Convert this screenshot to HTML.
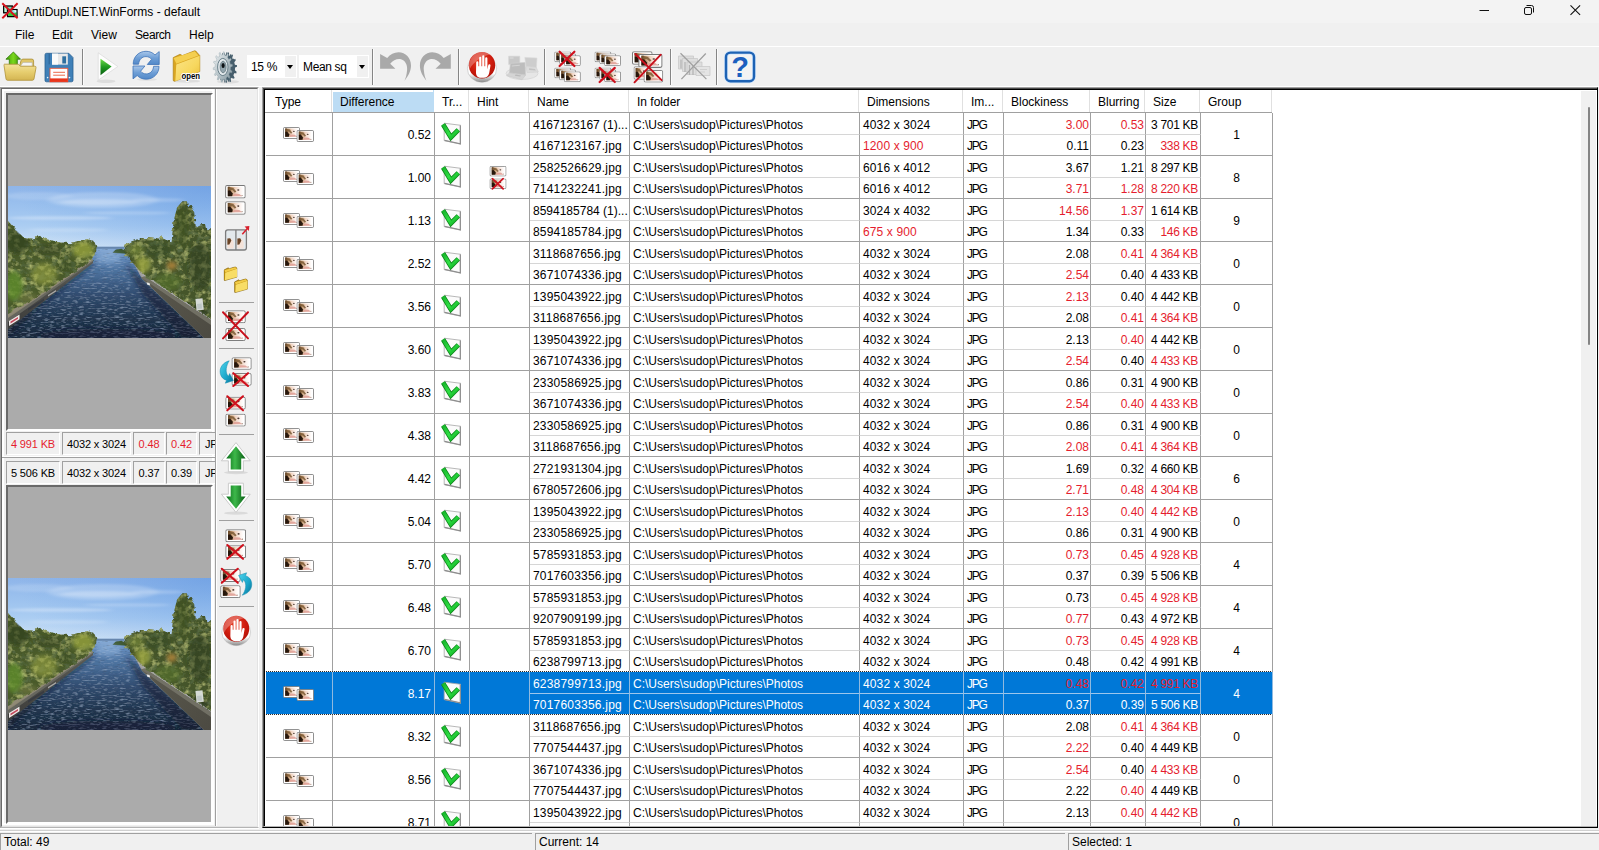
<!DOCTYPE html>
<html lang="en"><head><meta charset="utf-8"><title>AntiDupl.NET.WinForms - default</title>
<style>
html,body{margin:0;padding:0}
html{overflow:hidden;width:1599px;height:850px}
body{width:1599px;height:850px;overflow:hidden;position:relative;background:#f0f0f0;font-family:"Liberation Sans",sans-serif;font-size:12px;color:#000}
svg{display:block}
#titlebar{position:absolute;left:0;top:0;width:1599px;height:23px;background:#f3f3f3}
#titlebar .appicon{position:absolute;left:0;top:0}
#titlebar .title{position:absolute;left:24px;top:1px;line-height:23px;white-space:nowrap}
#titlebar .wc{position:absolute;top:0}
#menubar{position:absolute;left:0;top:23px;width:1599px;height:23px}
#menubar span{position:absolute;top:1px;line-height:23px}
#menubar span:nth-child(4){letter-spacing:-.4px}
#toolbar{position:absolute;left:0;top:46px;width:1599px;height:41px;box-sizing:border-box;border-top:1px solid #fff;border-bottom:1px solid #fff}
#toolbar .tb{position:absolute;top:4px;width:32px;height:32px}
#toolbar .sep{position:absolute;top:2px;width:1px;height:36px;background:#858585;box-shadow:1px 0 0 #fbfbfb}
#toolbar .combo{position:absolute;top:8px;height:23px;background:#fff;box-sizing:border-box;line-height:25px;padding-left:4px;letter-spacing:-.35px;white-space:nowrap;overflow:hidden}
#toolbar .combo i{position:absolute;right:1px;top:1px;width:11px;height:21px;background:#f0f0f0}
#toolbar .combo i:after{content:"";position:absolute;left:2px;top:9px;border:3px solid transparent;border-top:4px solid #000;border-bottom:0}
/* left container */
#leftpanel{position:absolute;left:0;top:87px;width:259px;height:741px;box-sizing:border-box;border-top:1px solid #a0a0a0;border-left:1px solid #a0a0a0;border-right:1px solid #fff;border-bottom:1px solid #b4b4b4;box-shadow:0 1px 0 #fff;background:#f0f0f0}
#leftpanel .lp-in{position:absolute;left:0;top:0;right:0;bottom:0;border-top:1px solid #696969;border-left:1px solid #696969;border-right:1px solid #e3e3e3;border-bottom:1px solid #e3e3e3}
#leftpanel .pframe{position:absolute;left:1px;top:1px;width:212px;height:736px;border:2px solid #fff;box-sizing:border-box}
#leftpanel .vline{position:absolute;left:214px;top:1px;width:1px;height:737px;background:#a0a0a0;border-right:1px solid #fff}
.pic{position:absolute;left:5px;width:207px;box-sizing:border-box;border-top:2px solid #696969;border-left:2px solid #696969;border-right:2px solid #fff;border-bottom:2px solid #fff;background:#ababab;overflow:hidden}
.pic svg{position:absolute;left:0}
.lblrow{position:absolute;left:1px;top:0;width:213px;height:23px;overflow:hidden}
.lbl{position:absolute;top:0;height:23px;box-sizing:border-box;border-top:1px solid #a0a0a0;border-left:1px solid #a0a0a0;border-right:1px solid #fff;border-bottom:1px solid #fff;line-height:23px;font-size:11px;letter-spacing:-.15px;text-align:center;white-space:nowrap;background:#f0f0f0;overflow:hidden}
.red{color:#e51d2e}
.split{position:absolute;left:1px;top:368px;width:213px;height:1px;background:#a0a0a0;border-top:1px solid #fff}
#side{position:absolute;left:216px;top:90px}
#side .sb{position:absolute;left:3px;width:32px;height:32px}
#side .hs{position:absolute;left:3px;width:34px;height:1px;background:#a0a0a0}
/* grid */
#grid{position:absolute;left:262px;top:87px;width:1336px;height:741px;box-sizing:border-box;border-top:1px solid #a0a0a0;border-left:1px solid #a0a0a0;border-right:1px solid #000;border-bottom:1px solid #000}
#grid:before{content:"";position:absolute;left:0;top:0;right:0;bottom:0;border-top:1px solid #4a4a4a;border-left:1px solid #4a4a4a;border-bottom:1px solid #b3b3b3}
#grid:after{content:"";position:absolute;left:1px;top:1px;right:0;bottom:1px;border-top:1px solid #000;border-left:1px solid #000}
#gridin{position:absolute;left:2px;top:2px;width:1332px;height:736px;background:#fff;overflow:hidden}
.hdr{position:absolute;left:0;top:0;width:1007px;height:22px;border-bottom:1px solid #a0a0a0}
.h{position:absolute;top:0;height:22px;line-height:24px;box-sizing:content-box;border-right:1px solid #e0e0e0;padding-left:7px;box-sizing:border-box;white-space:nowrap;overflow:hidden}
.h.sorted{background:linear-gradient(#fff 2px,#bcdcf4 2px);border-right-color:#bcdcf4}
.h:first-child{padding-left:9px}
.row{position:absolute;left:0;width:1007px;height:43px}
.c{position:absolute;box-sizing:content-box;border-right:1px solid #a0a0a0;border-bottom:1px solid #a0a0a0;white-space:nowrap;overflow:hidden}
.c.sub{border-bottom-color:#d6d6d6}
.c.l{}
.c.r{text-align:right}
.c.sz{letter-spacing:-.3px}
.c.nm{letter-spacing:.2px}
.c.dm{letter-spacing:.12px}
.c.jp{letter-spacing:-1.2px}
.c.ctr{text-align:center}
.c svg{position:absolute}
.c .ti{left:17px;top:14px}
.c .ci{left:4px;top:8px}
.c .hi{left:19px;top:10px}
.row.sel .c{background:#0078d7;color:#fff}
.row.sel .c.red{color:#e51d2e}
.vscroll{position:absolute;left:1318px;top:3px;width:15px;height:735px;background:#f0f0f0}
.vscroll .thumb{position:absolute;left:7px;top:16px;width:2px;height:238px;background:#858585;border-radius:1px}
#status{position:absolute;left:0;top:831px;width:1599px;height:18px;overflow:hidden;border-top:1px solid #fff;box-shadow:0 -1px 0 #d0d0d0}
#status .sp{position:absolute;top:1px;height:20px;line-height:17px;box-sizing:border-box;padding-left:3px;border-left:1px solid #a0a0a0;border-top:1px solid #a0a0a0}

#toolbar .tbsvg{position:absolute;left:0;top:-1px}

.row.sel:before,.row.sel:after{content:"";position:absolute;left:0;width:1007px;height:1px;background:repeating-linear-gradient(90deg,#f4f4f4 0 1px,#2a2a2a 1px 2px);z-index:2}
.row.sel:before{top:-1px}
.row.sel:after{top:42px}
.row.sel .c{border-right-color:#8fb9df}
.row.sel .c.sub{border-bottom-color:#9cc6ec}

</style></head>
<body>
<svg width="0" height="0" style="position:absolute">
<defs>
<linearGradient id="g-face" x1="0" y1="0" x2="1" y2="0"><stop offset="0" stop-color="#5e3e24"/><stop offset=".22" stop-color="#c0946a"/><stop offset=".48" stop-color="#f0d3c0"/><stop offset=".75" stop-color="#fbeee8"/><stop offset="1" stop-color="#ffffff"/></linearGradient>
<linearGradient id="g-chk" x1="0" y1="0" x2="1" y2="1"><stop offset="0" stop-color="#17b42a"/><stop offset=".55" stop-color="#2ee044"/><stop offset="1" stop-color="#0fae22"/></linearGradient>
<symbol id="ph" viewBox="0 0 20.5 13.5" preserveAspectRatio="none"><rect x=".5" y=".5" width="19.500" height="12.500" rx="1.500" fill="#fff" stroke="#787878"/><rect x="2.700" y="1.700" width="15.300" height="9.400" fill="url(#g-face)"/><path d="M2.700 1.700h2l-.4 3.800-1.600.6z" fill="#6e4e2c"/><path d="M4.400 2.300l3.800.6 3 3.500-1.500 1.200L7.200 5 4.300 5.200z" fill="#7d5c36" opacity=".85"/><path d="M2.700 11.100V5.700l2.300-.5 2.600 3.300-.5 2.600z" fill="#1d0f07" opacity=".92"/><path d="M7.300 11.100l1.800-2.600 5 .3 3 2.300z" fill="#e0a198" opacity=".9"/><ellipse cx="13.100" cy="4.900" rx="1.100" ry=".8" fill="#4c3a32"/><circle cx="16.900" cy="10.400" r=".6" fill="#9a8070"/></symbol>
<symbol id="i-type" viewBox="0 0 32 16"><use href="#ph" x="0" y="0" width="17" height="12"/><use href="#ph" x="13.5" y="3" width="17.5" height="12"/></symbol>
<symbol id="i-check" viewBox="0 0 22 26"><path d="M5.2 2.2l16.6 2.1v18.9L5.2 19.6z" fill="#fbfbfb" stroke="#a6a6a6" stroke-width=".8"/><path d="M21.3 4.6v18.2L5.6 19.4" fill="none" stroke="#8c8c8c" stroke-width="1.2"/><path d="M4.100 3.400L11.900 16.300 19.300 8.900" fill="none" stroke="#0b8418" stroke-width="4.800" stroke-linejoin="miter" stroke-linecap="butt"/><path d="M4.100 3.400L11.900 16.300 19.300 8.900" fill="none" stroke="url(#g-chk)" stroke-width="3.300" stroke-linejoin="miter" stroke-linecap="butt"/></symbol>
<symbol id="xr" viewBox="0 0 14 14"><path d="M1 1.2l12 11.6M13 1.2L1 12.8" stroke="#d0121e" stroke-width="1.9" fill="none" stroke-linecap="round"/></symbol>
<symbol id="i-hint" viewBox="0 0 18 24"><use href="#ph" x=".5" y="0" width="17" height="10.5"/><use href="#ph" x=".5" y="12.5" width="17" height="10.5"/><use href="#xr" x="2" y="11.5" width="13.5" height="12.5"/></symbol>
<symbol id="i-app" viewBox="0 0 20 20"><rect x="3.700" y="6" width="8.600" height="6.800" fill="#7fd6b0" stroke="#000" stroke-width="1.300"/><path d="M4.600 7h2v5h-2z" fill="#bdf0d8"/><rect x="7.600" y="9.600" width="9.400" height="7" fill="#8fe0e0" stroke="#000" stroke-width="1.300"/><path d="M8.300 16v-2.300l2.200-1.500 3.200 1.300 2.600-1v3.500z" fill="#35c83a"/><path d="M12.500 10.300h3.800v2.200z" fill="#e8ffff"/><path d="M2.300 3.300l15.300 15M17.600 3.300L2.300 18.300" stroke="#d8141c" stroke-width="1.900"/></symbol>
</defs>
</svg>
<svg width="0" height="0" style="position:absolute">
<defs>
<linearGradient id="c-sky" x1="0" y1="0" x2="0" y2="1"><stop offset="0" stop-color="#8fb5e9"/><stop offset=".3" stop-color="#9bc1ee"/><stop offset=".6" stop-color="#abcdf2"/><stop offset=".85" stop-color="#c6ddf5"/><stop offset="1" stop-color="#d6e8f8"/></linearGradient><radialGradient id="c-sky2" cx="1" cy="0" r=".95" gradientTransform="scale(1 1.6)"><stop offset="0" stop-color="#5a93e0" stop-opacity=".5"/><stop offset=".5" stop-color="#5a93e0" stop-opacity=".2"/><stop offset="1" stop-color="#5a93e0" stop-opacity="0"/></radialGradient>
<linearGradient id="c-wat" x1="0" y1="0" x2="0" y2="1"><stop offset="0" stop-color="#86aad6"/><stop offset=".1" stop-color="#6189ba"/><stop offset=".26" stop-color="#4b709c"/><stop offset=".5" stop-color="#324e72"/><stop offset=".75" stop-color="#223751"/><stop offset="1" stop-color="#19283b"/></linearGradient>
<linearGradient id="c-wallL" x1="1" y1="0" x2="0" y2="1"><stop offset="0" stop-color="#5c5c56"/><stop offset="1" stop-color="#3c3c3a"/></linearGradient>
<linearGradient id="c-wallR" x1="0" y1="0" x2="1" y2="1"><stop offset="0" stop-color="#5c5a4e"/><stop offset="1" stop-color="#4c4a42"/></linearGradient>
<filter id="c-blur" x="-10%" y="-100%" width="120%" height="300%"><feGaussianBlur stdDeviation="3 1.1"/></filter>
<filter id="c-b2" x="-30%" y="-30%" width="160%" height="160%"><feGaussianBlur stdDeviation="2.2"/></filter>
<filter id="c-tree" x="-3%" y="-3%" width="106%" height="106%"><feTurbulence type="fractalNoise" baseFrequency=".16 .18" numOctaves="3" seed="11" result="n"/><feDisplacementMap in="SourceGraphic" in2="n" scale="4.500" xChannelSelector="R" yChannelSelector="G" result="d"/><feColorMatrix in="n" type="matrix" values="0 0 0 0 .5  0 0 0 0 .56  0 0 0 0 .2  2.2 0 0 0 -1.05" result="hi"/><feComposite in="hi" in2="d" operator="in" result="hi2"/><feColorMatrix in="n" type="matrix" values="0 0 0 0 .1  0 0 0 0 .15  0 0 0 0 .06  0 -3.4 0 0 1.7" result="lo"/><feComposite in="lo" in2="d" operator="in" result="lo2"/><feMerge result="m"><feMergeNode in="d"/><feMergeNode in="hi2"/><feMergeNode in="lo2"/></feMerge><feGaussianBlur in="m" stdDeviation=".45"/></filter>
<filter id="c-rip" x="0" y="0" width="100%" height="100%"><feTurbulence type="fractalNoise" baseFrequency=".17 .8" numOctaves="2" seed="3" result="n"/><feColorMatrix in="n" type="matrix" values="0 0 0 0 .32  0 0 0 0 .44  0 0 0 0 .62  1.5 0 0 0 -.78" result="hi"/><feComposite in="hi" in2="SourceGraphic" operator="in" result="hi2"/><feColorMatrix in="n" type="matrix" values="0 0 0 0 .05  0 0 0 0 .09  0 0 0 0 .16  0 -2.4 0 0 1.05" result="lo"/><feComposite in="lo" in2="SourceGraphic" operator="in" result="lo2"/><feMerge><feMergeNode in="SourceGraphic"/><feMergeNode in="hi2"/><feMergeNode in="lo2"/></feMerge></filter>
<clipPath id="c-cl"><path d="M-4 33L0 35l7 8 9 9 9 1.700 4.500-4.500 4.500 4.500 4.500-1 8 2.800 7 .9 9 .8 9-2.600 9-1.300 5.400 2.200 2.700 7-1 6-3.600 5.800L59 90 41 103 21 116 0 127l-4 2z"/></clipPath><clipPath id="c-cr"><path d="M115.400 64.400l2.600-5.400 5.400-3.500 9-3.600h10.700l8.900 1.800 1.800-3.600 3.600 3.600 6.300 1.800 1.800-19.700 3.600-14.300 5.300-6.300h4.500l.9 6.300 2.700-2.700 3.500 6.200 1.800 16.100 4.500-2.600 4.500-.9 1.800 7.100 4.400-3.600 3 1v93l-6-4-20-13-24-16-14-9-9-7-9.800-10.800z"/></clipPath><clipPath id="c-clip"><rect width="203" height="152"/></clipPath>
<symbol id="canal" viewBox="0 0 203 152" preserveAspectRatio="none"><g clip-path="url(#c-clip)">
<rect width="203" height="66" fill="url(#c-sky)"/><rect width="203" height="66" fill="url(#c-sky2)"/>
<g filter="url(#c-blur)" fill="#fff"><ellipse cx="95" cy="14" rx="55" ry="8" opacity=".2"/><ellipse cx="92" cy="16" rx="40" ry="3" opacity=".25"/><ellipse cx="52" cy="32" rx="52" ry="1.800" opacity=".3"/><ellipse cx="150" cy="14" rx="26" ry="2" opacity=".2"/><ellipse cx="120" cy="27" rx="44" ry="1.600" opacity=".2"/><ellipse cx="30" cy="10" rx="34" ry="4" opacity=".14"/><ellipse cx="60" cy="44" rx="40" ry="2" opacity=".18"/></g>
<!-- far shore / horizon -->
<path d="M84 60.400h36v3.500H84z" fill="#86a6cc"/><path d="M88 61.200h28v1.700H88z" fill="#5e7fa6"/>
<!-- water -->
<path d="M84 62.800h34L134 93l62 59H0v-9.500L84 76.500z" fill="url(#c-wat)" filter="url(#c-rip)"/>
<path d="M104.500 66.800l3-3 6-1 5 3 .5 2z" fill="#3f5a34"/>
<g filter="url(#c-b2)"><path d="M0 143l84-66 4 1-52 40-36 34z" fill="#0d1828" opacity=".55"/><path d="M116 76l18 17 62 59h-22l-40-44z" fill="#0e1a2a" opacity=".5"/><ellipse cx="100" cy="150" rx="70" ry="8" fill="#101c30" opacity=".45"/><ellipse cx="101" cy="72" rx="12" ry="6" fill="#a8c8ec" opacity=".35"/></g>
<!-- left wall + path -->
<path d="M85 74.600L0 131.500v12L85 77z" fill="url(#c-wallL)"/>
<path d="M85 74.400L0 131v5L85 75.500z" fill="#6c6c64" opacity=".85"/>
<path d="M85 73L0 124v8L85 74.600z" fill="#8d8670" opacity=".9"/>
<path d="M1 135l10.500-6.600v4.800L1 140z" fill="#efe9e8"/><path d="M2.500 135.600l7.500-4.600v1.800l-7.500 4.600z" fill="#c24a5c"/>
<path d="M20 122.500l16-10v2.200l-16 10z" fill="#343840" opacity=".75"/><path d="M40 109l8-5v1.600l-8 5z" fill="#dcdcdc" opacity=".65"/><path d="M52 101l6-3.800v1.400l-6 3.800z" fill="#40444c" opacity=".6"/>
<!-- left trees -->
<path filter="url(#c-tree)" d="M-4 33L0 35l7 8 9 9 9 1.700 4.500-4.500 4.500 4.500 4.500-1 8 2.800 7 .9 9 .8 9-2.600 9-1.300 5.400 2.200 2.700 7-1 6-3.600 5.800L59 90 41 103 21 116 0 127l-4 2z" fill="#4a5a2a"/>
<g clip-path="url(#c-cl)"><g filter="url(#c-b2)"><ellipse cx="75" cy="64" rx="11" ry="8" fill="#9aa63c" opacity=".75"/><ellipse cx="36" cy="88" rx="13" ry="11" fill="#94a040" opacity=".6"/><ellipse cx="6" cy="100" rx="9" ry="15" fill="#5f8c2c" opacity=".8"/><ellipse cx="10" cy="56" rx="12" ry="12" fill="#2f401c" opacity=".7"/><ellipse cx="40" cy="64" rx="14" ry="6" fill="#34461e" opacity=".55"/><ellipse cx="58" cy="80" rx="9" ry="6" fill="#3a4c20" opacity=".5"/><ellipse cx="20" cy="112" rx="10" ry="5" fill="#7a8048" opacity=".5"/></g></g>
<!-- right wall -->
<path d="M133 91.500l3.500-1L203 134v18h-7z" fill="url(#c-wallR)"/><path d="M133 91.500l3.500-1L203 134v5z" fill="#77756a" opacity=".85"/>
<path d="M138.500 96.300l3 .6.800 2.600-3-.8z" fill="#e8e8e8"/>
<!-- right trees -->
<path filter="url(#c-tree)" d="M115.400 64.400l2.600-5.400 5.400-3.500 9-3.600h10.700l8.900 1.800 1.800-3.600 3.600 3.600 6.300 1.800 1.800-19.700 3.600-14.300 5.300-6.300h4.500l.9 6.300 2.700-2.700 3.500 6.200 1.800 16.100 4.500-2.600 4.500-.9 1.800 7.100 4.400-3.600 3 1v93l-6-4-20-13-24-16-14-9-9-7-9.800-10.800z" fill="#44542a"/>
<g clip-path="url(#c-cr)"><g filter="url(#c-b2)"><ellipse cx="174" cy="40" rx="7" ry="22" fill="#3a4e22" opacity=".6"/><ellipse cx="134" cy="79" rx="9" ry="8" fill="#98a43e" opacity=".8"/><ellipse cx="163.700" cy="79.600" rx="5" ry="4" fill="#b8863a" opacity=".85"/><ellipse cx="128" cy="64" rx="8" ry="6" fill="#7c8c38" opacity=".6"/><ellipse cx="160" cy="96" rx="14" ry="9" fill="#56702c" opacity=".65"/><ellipse cx="192" cy="80" rx="12" ry="24" fill="#2c3c1a" opacity=".6"/><ellipse cx="150" cy="64" rx="12" ry="8" fill="#34461e" opacity=".5"/><ellipse cx="124" cy="80" rx="6" ry="6" fill="#1e2a14" opacity=".55"/><ellipse cx="186" cy="126" rx="14" ry="7" fill="#28341a" opacity=".6"/></g></g>
<path d="M187.500 113l7-.8 1.300 11.600-7.300.8z" fill="#e4e8e8" opacity=".9"/><path d="M189 118l4.500-.5.600 5-4.500.5z" fill="#b8c0c0" opacity=".8"/>
</g></symbol>
</defs>
</svg>
<div id="titlebar"><svg class="appicon" width="20" height="20" viewBox="0 0 20 20"><use href="#i-app"/></svg><span class="title">AntiDupl.NET.WinForms - default</span><svg class="wc" style="left:1478px" width="14" height="20" viewBox="0 0 14 20"><path d="M1.5 10.500h9.500" stroke="#111" stroke-width="1" fill="none"/></svg><svg class="wc" style="left:1523px" width="14" height="20" viewBox="0 0 14 20"><rect x="1.5" y="7.5" width="7" height="7" rx="1.5" stroke="#111" fill="none"/><path d="M3.5 5.5h5a2 2 0 0 1 2 2v5" stroke="#111" fill="none"/></svg><svg class="wc" style="left:1569px" width="14" height="20" viewBox="0 0 14 20"><path d="M1.500 5.300l9.600 9.600M11.100 5.300l-9.600 9.600" stroke="#111" stroke-width="1.100" fill="none"/></svg></div>
<div id="menubar"><span style="left:15px">File</span><span style="left:52px">Edit</span><span style="left:91px">View</span><span style="left:135px">Search</span><span style="left:189px">Help</span></div>
<div id="toolbar">
<span class="sep" style="left:82px"></span><span class="sep" style="left:372px"></span><span class="sep" style="left:458px"></span><span class="sep" style="left:544px"></span><span class="sep" style="left:670px"></span><span class="sep" style="left:716px"></span>
<div class="combo" style="left:247px;width:50px">15 %<i></i></div>
<div class="combo" style="left:299px;width:70px">Mean sq<i></i></div>
<svg class="tbsvg" width="800" height="41" viewBox="0 46 800 41">
<defs>
<linearGradient id="g-fold" x1="0" y1="0" x2="0" y2="1"><stop offset="0" stop-color="#f3e29a"/><stop offset=".5" stop-color="#e6cd6e"/><stop offset="1" stop-color="#d4b552"/></linearGradient>
<linearGradient id="g-garr" x1="0" y1="0" x2="1" y2="0"><stop offset="0" stop-color="#3f9a0a"/><stop offset=".5" stop-color="#7ad81c"/><stop offset="1" stop-color="#3c9208"/></linearGradient>
<linearGradient id="g-play" x1="0" y1="0" x2="0" y2="1"><stop offset="0" stop-color="#6fdc4a"/><stop offset=".5" stop-color="#1f9a22"/><stop offset="1" stop-color="#0a5c10"/></linearGradient>
<linearGradient id="g-blue" x1="0" y1="0" x2="0" y2="1"><stop offset="0" stop-color="#a9c7ea"/><stop offset=".5" stop-color="#6f9fd6"/><stop offset="1" stop-color="#5288c8"/></linearGradient>
<linearGradient id="g-yfold" x1="0" y1="0" x2="1" y2="1"><stop offset="0" stop-color="#fbe588"/><stop offset=".6" stop-color="#f7d75e"/><stop offset="1" stop-color="#e9bd38"/></linearGradient>
<radialGradient id="g-red" cx=".45" cy=".35" r=".75"><stop offset="0" stop-color="#e8432a"/><stop offset=".55" stop-color="#cf1c0e"/><stop offset="1" stop-color="#a80e06"/></radialGradient>
<linearGradient id="g-rim" x1="0" y1="0" x2="0" y2="1"><stop offset="0" stop-color="#f4f4f4"/><stop offset=".7" stop-color="#ffffff"/><stop offset="1" stop-color="#8a8a8a"/></linearGradient>
<linearGradient id="g-gear" x1="0" y1="0" x2="1" y2="1"><stop offset="0" stop-color="#eef2f3"/><stop offset=".5" stop-color="#b9c5ca"/><stop offset="1" stop-color="#7f939c"/></linearGradient>
<symbol id="stop" viewBox="0 0 32 34"><ellipse cx="16" cy="18.6" rx="14.6" ry="14.4" fill="url(#g-rim)"/><ellipse cx="16" cy="19.4" rx="14.6" ry="13.8" fill="none" stroke="#9a9a9a" stroke-width=".6" opacity=".6"/><circle cx="16" cy="16" r="13.2" fill="url(#g-red)"/><path d="M3.6 20A13.2 13.2 0 0 1 24 5.4C16 7 8 12 3.6 20z" fill="#fff" opacity=".28"/><path d="M10.2 13.2a1.1 1.1 0 0 1 2.2 0V17h.8V8.6a1.1 1.1 0 0 1 2.2 0V17h.8V7.2a1.1 1.1 0 0 1 2.2 0V17h.8V9.2a1.1 1.1 0 0 1 2.2 0v11l.9-4.4a1.15 1.15 0 0 1 2.2.4l-1.3 7.6c-.6 3-2.600 4.800-5.600 4.800h-2.600c-3 0-5-2-5-5z" fill="#fff"/></symbol>
<symbol id="stack" viewBox="0 0 28 15"><use href="#ph" x="0" y="0" width="17.300" height="11"/><use href="#ph" x="5" y="2" width="17.300" height="11"/><use href="#ph" x="10" y="4" width="17.300" height="11"/></symbol>
</defs>
<!-- open profile: folder with green arrow -->
<path d="M19.200 67.500l1.800-6.800q.4-1.600 2-1.600h8.800q1.800 0 1.800 1.800v6.600z" fill="#e0c668" stroke="#a88c34" stroke-width=".8"/>
<path d="M20.300 66.600l2.600-4.200h9.300v4.200z" fill="#f4f4f4" stroke="#aaa" stroke-width=".5"/>
<path d="M9.300 64.800V59.200H5.900L13.400 52l7.100 7.200h-3.200v5.600z" fill="url(#g-garr)" stroke="#2f7a06" stroke-width=".8" stroke-linejoin="round"/>
<path d="M4.400 64.200h13.800l2.200 2h14.300q1.500 0 1.300 1.500l-2 11.200q-.3 1.400-1.700 1.400H7.600q-1.400 0-1.600-1.400L4 65.400q-.2-1.200.4-1.200z" fill="url(#g-fold)" stroke="#b0933a" stroke-width=".8"/>
<!-- save -->
<path d="M46.500 53.300h22.300l4.200 4.200v22.800q0 1.500-1.500 1.500H46.500q-1.500 0-1.500-1.500V54.800q0-1.500 1.500-1.500z" fill="#3f80b8" stroke="#2a5f90" stroke-width=".8"/>
<path d="M49.200 53.700v10.600" stroke="#2a5f90" stroke-width=".9"/>
<rect x="52" y="53.600" width="15.800" height="11" fill="#e9e9e9"/><rect x="52" y="53.600" width="6" height="11" fill="#fafafa"/><rect x="62.300" y="56.300" width="3.800" height="7.200" fill="#2f6f9f"/>
<rect x="50" y="68.300" width="17.800" height="13.500" fill="#fff" stroke="#ec5a3c" stroke-width=".9"/><rect x="50" y="78.400" width="17.800" height="3.500" fill="#e8351c"/>
<path d="M53.200 72.300h11.800M53.200 75.200h11.800" stroke="#ec6a4c" stroke-width="1"/>
<circle cx="47.600" cy="77.600" r=".8" fill="#e8f4ff"/><circle cx="69.500" cy="77.600" r=".8" fill="#e8f4ff"/>
<!-- play -->
<ellipse cx="106" cy="81.300" rx="9.500" ry="1.800" fill="#000" opacity=".08"/>
<path d="M98.200 52.800L117.800 66.500L98.200 80.200z" fill="#fdfdfd" stroke="#d9d9d9" stroke-width=".7" stroke-linejoin="round"/>
<path d="M100.500 58.800L111.600 66.500L100.500 75.200z" fill="url(#g-play)"/>
<!-- refresh -->
<ellipse cx="147" cy="79.500" rx="10" ry="1.500" fill="#000" opacity=".06"/>
<path d="M133.200 64.200C133.200 56.500 139 51.300 146 51.300C149.800 51.300 152.800 52.700 155 55L159.200 51.600V64.500H147.300L151.600 59.300C150.200 57.600 148.400 56.600 146 56.600C142 56.600 139 59.500 138.600 64.200z" fill="url(#g-blue)" stroke="#3f73b8" stroke-width=".8" stroke-linejoin="round"/>
<path d="M159 66.300C159 74 153.200 79.200 146.200 79.200C142.400 79.200 139.400 77.800 137.200 75.500L133 78.900V66H144.900L140.600 71.200C142 72.900 143.800 73.900 146.200 73.900C150.200 73.900 153.200 71 153.600 66.300z" fill="url(#g-blue)" stroke="#3f73b8" stroke-width=".8" stroke-linejoin="round"/>
<!-- folder open -->
<ellipse cx="187" cy="81.200" rx="13" ry="1.600" fill="#000" opacity=".08"/>
<path d="M173.200 57.600L180 54.200L182.300 55.600L194.500 50.800Q196 50.600 196.600 52L199.800 55.600V71.500L174.600 81.300Q173.200 81.400 173.200 80z" fill="#d9a520" stroke="#a87c10" stroke-width=".6" stroke-linejoin="round"/>
<path d="M176.300 64.600L199.600 55.700V71.500L175.300 81.200z" fill="url(#g-yfold)"/>
<path d="M173.600 58L194.800 51.200L198.400 55.400L176.400 63.800z" fill="#f4cf50"/>
<text x="181.400" y="78.700" font-family="Liberation Sans, sans-serif" font-size="9.500" font-weight="bold" fill="#000" stroke="#fff" stroke-width="1.800" paint-order="stroke" textLength="18.600" lengthAdjust="spacingAndGlyphs">open</text>
<!-- gear -->
<ellipse cx="228" cy="81.800" rx="11" ry="1.700" fill="#000" opacity=".08"/>
<path id="gearp" d="M0.0 -12.2L0.5 -15.2L1.6 -15.0L1.7 -11.9L3.3 -11.0L4.6 -13.3L5.6 -12.4L4.8 -9.5L6.0 -7.6L7.8 -8.8L8.4 -7.3L6.9 -5.3L7.5 -2.7L9.5 -2.6L9.6 -0.8L7.7 -0.0L7.5 2.7L9.2 4.2L8.9 5.8L6.9 5.3L6.0 7.6L7.2 10.1L6.4 11.4L4.8 9.5L3.3 11.0L3.7 14.0L2.6 14.6L1.7 11.9L0.0 12.2L-0.5 15.2L-1.6 15.0L-1.7 11.9L-3.3 11.0L-4.6 13.3L-5.6 12.4L-4.8 9.5L-6.0 7.6L-7.8 8.8L-8.4 7.3L-6.9 5.3L-7.5 2.7L-9.5 2.6L-9.6 0.8L-7.7 0.0L-7.5 -2.7L-9.2 -4.2L-8.9 -5.8L-6.9 -5.3L-6.0 -7.6L-7.2 -10.1L-6.4 -11.4L-4.8 -9.5L-3.3 -11.0L-3.7 -14.0L-2.6 -14.6L-1.7 -11.9z" transform="translate(227.400 67.600)" fill="#465e6c"/>
<use href="#gearp" x="-1.500" y="-.2" fill="#5d7785"/>
<g transform="translate(222.800 67)"><path d="M0.0 -12.2L0.5 -15.2L1.6 -15.0L1.7 -11.9L3.3 -11.0L4.6 -13.3L5.6 -12.4L4.8 -9.5L6.0 -7.6L7.8 -8.8L8.4 -7.3L6.9 -5.3L7.5 -2.7L9.5 -2.6L9.6 -0.8L7.7 -0.0L7.5 2.7L9.2 4.2L8.9 5.8L6.9 5.3L6.0 7.6L7.2 10.1L6.4 11.4L4.8 9.5L3.3 11.0L3.7 14.0L2.6 14.6L1.7 11.9L0.0 12.2L-0.5 15.2L-1.6 15.0L-1.7 11.9L-3.3 11.0L-4.6 13.3L-5.6 12.4L-4.8 9.5L-6.0 7.6L-7.8 8.8L-8.4 7.3L-6.9 5.3L-7.5 2.7L-9.5 2.6L-9.6 0.8L-7.7 0.0L-7.5 -2.7L-9.2 -4.2L-8.9 -5.8L-6.9 -5.3L-6.0 -7.6L-7.2 -10.1L-6.4 -11.4L-4.8 -9.5L-3.3 -11.0L-3.7 -14.0L-2.6 -14.6L-1.7 -11.9z" fill="url(#g-gear)" stroke="#93a3ab" stroke-width=".4"/><ellipse cx="0" cy="0" rx="5.200" ry="8.600" fill="#e3e9ec" stroke="#5f7680" stroke-width=".9"/><ellipse cx=".3" cy="0" rx="3" ry="5.800" fill="#93a5ad" stroke="#4a5f68" stroke-width=".6"/><ellipse cx=".3" cy="-1.600" rx="1.600" ry="2.500" fill="#0c1114"/></g>
<!-- undo / redo -->
<path id="undo" d="M380.100 54.100V68.800H395.400L390.200 63.800C392.800 60.400 396.600 58.600 400 59C404.800 59.600 407.600 64.500 407.100 70C406.700 74.800 405.700 78 404.500 80.800C408 76.500 411 71.300 411 65.600C411 58 405.600 52.300 398.500 52.300C394.200 52.300 390.200 54.400 387.200 57.900z" fill="#a9a9a9"/>
<use href="#undo" transform="translate(830.900 0) scale(-1 1)"/>
<!-- stop -->
<use href="#stop" x="466" y="49.200" width="32" height="34"/>
<!-- computers (disabled) -->
<ellipse cx="522" cy="73.500" rx="16" ry="6" fill="#e6e6e6" stroke="#d6d6d6" stroke-width=".8"/>
<path d="M508.600 56.200h11.200v8.400h-11.200z" fill="#c8c8c8" stroke="#d6d6d6" stroke-width=".6"/><path d="M509.600 57.400h4v1h-4z" fill="#dedede"/>
<path d="M524.800 57.400L537 58l-.6 9.600-10.400-1.200z" fill="#cdcdcd" stroke="#dadada" stroke-width=".6"/><path d="M526 66.400l10.400 1.200 2 4.400-11.400.6z" fill="#dcdcdc" stroke="#cfcfcf" stroke-width=".5"/><path d="M529 68.200l6 .8.800 1.600-6.600-.6z" fill="#c2c2c2"/>
<path d="M510.400 63.400L525 62.400l.6 12.600-16.200-2z" fill="#bdbdbd" stroke="#cfcfcf" stroke-width=".7"/><path d="M511.800 65.400l8-.6v1l-8 .6z" fill="#d4d4d4"/>
<path d="M509.400 73l16.200 2-3.600 4.800-15.400-4.200z" fill="#d4d4d4" stroke="#c4c4c4" stroke-width=".5"/><path d="M515.600 74.600l5.400.8-.8 1.200-5.400-.9z" fill="#b9b9b9"/>
<!-- delete first / second / both -->
<use href="#stack" x="554.200" y="51.400" width="27.300" height="14.700"/><use href="#stack" x="554.200" y="67.500" width="27.300" height="14.700"/>
<path d="M559.600 51.700L574.400 66M574.400 51.700L559.600 66" stroke="#d0101c" stroke-width="2.200" stroke-linecap="round"/>
<use href="#stack" x="594.400" y="51.400" width="27.300" height="14.700"/><use href="#stack" x="594.400" y="67.500" width="27.300" height="14.700"/>
<path d="M599.600 67.900L614.800 82M614.800 67.900L599.600 82" stroke="#d0101c" stroke-width="2.200" stroke-linecap="round"/>
<use href="#ph" x="632" y="51.300" width="20.600" height="13.400"/><use href="#ph" x="638.200" y="53.900" width="24.400" height="14"/>
<use href="#ph" x="633.600" y="66.300" width="16" height="13.400"/><use href="#ph" x="643.600" y="70" width="19.600" height="12.600"/>
<path d="M635.300 54L661.600 80.200M660.800 54.700L634.500 82.300" stroke="#c8101c" stroke-width="1.900" stroke-linecap="round"/>
<!-- disabled mistake icon -->
<g fill="#dedede" stroke="#c6c6c6" stroke-width=".7"><path d="M678.500 56h15v13h-15z"/><path d="M682.500 58.500h15v13h-15z"/><path d="M687 62h15v12.500h-15z"/><path d="M696 66.500h14v9h-14z" fill="#e4e4e4"/></g>
<path d="M681 59.500v9M685 62v10M689.500 65v10M693 66v9" stroke="#b4b4b4" stroke-width="1.300"/><path d="M700 69.500h7M700 72h5" stroke="#cacaca" stroke-width=".8"/>
<path d="M680.500 53.300L706.400 79.100M705.800 53.500L681.400 79.100" stroke="#a0a0a0" stroke-width="1.300"/>
<!-- help -->
<rect x="726" y="52.600" width="28" height="28.600" rx="4.500" fill="#f3f3f3" stroke="#cfe4fb" stroke-width="4"/>
<rect x="726" y="52.600" width="28" height="28.600" rx="4.500" fill="none" stroke="#1d62b4" stroke-width="2.400"/>
<text x="740.200" y="77.300" font-family="Liberation Sans, sans-serif" font-size="29" font-weight="bold" fill="#1b5fbf" text-anchor="middle">?</text>
</svg>
</div>
<div id="leftpanel"><div class="lp-in"></div><div class="pframe"></div><div class="vline"></div>
<div class="pic" style="top:5px;height:338px"><svg width="203" height="152" viewBox="0 0 203 152" style="top:91px"><use href="#canal" width="203" height="152"/></svg>
</div>
<div class="lblrow" style="top:344px"><span class="lbl red" style="left:4px;width:54px">4 991 KB</span><span class="lbl" style="left:60px;width:69px">4032 x 3024</span><span class="lbl red" style="left:131px;width:32px">0.48</span><span class="lbl red" style="left:164px;width:31px">0.42</span><span class="lbl" style="left:197px;width:30px;text-align:left;padding-left:5px">JPG</span></div>
<div class="split"></div>
<div class="lblrow" style="top:373px"><span class="lbl" style="left:4px;width:54px">5 506 KB</span><span class="lbl" style="left:60px;width:69px">4032 x 3024</span><span class="lbl" style="left:131px;width:32px">0.37</span><span class="lbl" style="left:164px;width:31px">0.39</span><span class="lbl" style="left:197px;width:30px;text-align:left;padding-left:5px">JPG</span></div>
<div class="pic" style="top:397px;height:339px"><svg width="203" height="152" viewBox="0 0 203 152" style="top:91px"><use href="#canal" width="203" height="152"/></svg>
</div>
</div>
<svg id="side" width="44" height="736" viewBox="216 90 44 736">
<defs>
<linearGradient id="g-up" x1="0" y1="0" x2="1" y2="0"><stop offset="0" stop-color="#0a6a18"/><stop offset=".45" stop-color="#3db84a"/><stop offset="1" stop-color="#095c14"/></linearGradient>
<linearGradient id="g-cy" x1="0" y1="0" x2="1" y2="1"><stop offset="0" stop-color="#4fd4ec"/><stop offset=".6" stop-color="#18a4c8"/><stop offset="1" stop-color="#0c6f94"/></linearGradient>
<symbol id="yf" viewBox="0 0 14 14.500"><path d="M.4 3.500L4.600 1.300l1.200.9L11.600.3q.8-.2 1.100.5l1 1.200v8.600L1.200 14.200q-.8.100-.8-.7z" fill="#c99a18" stroke="#7a5c08" stroke-width=".6" stroke-linejoin="round"/><path d="M1.700 6.200L13.600 2.200v8.400L1.300 14z" fill="#f8dd66"/><path d="M.8 3.800L11.800.7l1.500 1.400L1.900 5.700z" fill="#f2cc48"/></symbol>
</defs>
<!-- 1 show both -->
<use href="#ph" x="225.100" y="185.100" width="20.600" height="13.500"/><use href="#ph" x="225.100" y="201.200" width="20.600" height="13.500"/>
<!-- 2 side by side w/ arrow -->
<rect x="225.600" y="229.800" width="20.800" height="20.200" rx="2.200" fill="#e3e9ec" stroke="#7c7c7c" stroke-width="1.300"/><path d="M235.900 230v20" stroke="#7c7c7c" stroke-width="1.300"/>
<g><path d="M227.400 248.600v-8.200l1.600-1.600 3.200.6 1.400 2.600v6.600z" fill="#f4e2d8"/><path d="M227.400 238.600l2.800-.4 1.200 2.400-2 3.800-2 .4z" fill="#6a4426"/><path d="M237.400 248.600v-8.200l1.600-1.600 3.200.6 1.400 2.600v6.600z" fill="#f4e2d8"/><path d="M237.400 238.600l2.800-.4 1.200 2.400-2 3.800-2 .4z" fill="#6a4426"/></g>
<path d="M242.300 234.200L248 227.800" stroke="#d8202c" stroke-width="1.500"/><path d="M244.600 226.400l4.800-.4-.6 4.900z" fill="#d8202c"/>
<!-- 3 folders -->
<use href="#yf" x="223.600" y="266.500" width="13.800" height="14.400"/><use href="#yf" x="234.100" y="278.500" width="13.800" height="14.400"/>
<path d="M219 302.500h35M219 348.500h35M219 434.500h35M219 520.500h35M219 606.500h35" stroke="#a0a0a0" stroke-width="1"/>
<!-- 4 delete both -->
<use href="#ph" x="225.300" y="310.300" width="20.500" height="12.900"/><use href="#ph" x="225.300" y="328.100" width="20.500" height="12.900"/>
<path d="M223 312.200L248 338.400M248 312.200L223 338.400" stroke="#c8101c" stroke-width="2" stroke-linecap="round"/>
<!-- 5 replace 2nd by 1st -->
<use href="#ph" x="231.500" y="357.300" width="20.200" height="12.500"/><use href="#ph" x="231.500" y="373" width="20.200" height="12.800"/>
<path d="M233.300 373.200L248 386M248 373.200L233.300 386" stroke="#d0101c" stroke-width="2.100" stroke-linecap="round"/>
<path d="M229.200 360.800C223 362.500 219.200 367.500 220.300 373.500C221 377.200 223.500 379.500 226.500 380.300L225.300 383.200L233.400 380.600L229.600 373.600L228.500 376.300C226.600 374.600 225.800 371.800 226.300 368.600C226.800 365.500 227.800 362.800 229.200 360.800z" fill="url(#g-cy)" stroke="#1088ac" stroke-width=".5"/>
<!-- 6 delete first -->
<use href="#ph" x="225.300" y="396.700" width="20.500" height="12.900"/><use href="#ph" x="225.300" y="413.700" width="20.500" height="12.900"/>
<path d="M227.300 396.300L243 410.300M243 396.300L227.300 410.300" stroke="#d0101c" stroke-width="2.100" stroke-linecap="round"/>
<!-- 7/8 arrows -->
<ellipse cx="236" cy="472.600" rx="12" ry="1.600" fill="#000" opacity=".09"/>
<path d="M236 442.600L250.200 460.800H243.400V471.800H228.400V460.800H221.400z" fill="#fff" stroke="#c6c6c6" stroke-width=".9" stroke-linejoin="round"/>
<path d="M236 446.200L245.600 458.600H241.200V469.600H230.700V458.600H226.200z" fill="url(#g-up)"/>
<ellipse cx="236" cy="513.200" rx="12" ry="1.600" fill="#000" opacity=".09"/>
<path d="M236 512.400L250.200 494.200H243.400V483.200H228.400V494.200H221.400z" fill="#fff" stroke="#c6c6c6" stroke-width=".9" stroke-linejoin="round"/>
<path d="M236 508.800L245.600 496.400H241.200V485.400H230.700V496.400H226.200z" fill="url(#g-up)"/>
<!-- 9 delete second -->
<use href="#ph" x="225.300" y="529.200" width="20.800" height="12.900"/><use href="#ph" x="225.300" y="545.300" width="20.800" height="12.900"/>
<path d="M227.300 545L243 558.800M243 545L227.300 558.800" stroke="#d0101c" stroke-width="2.100" stroke-linecap="round"/>
<!-- 10 replace 1st by 2nd -->
<use href="#ph" x="220.200" y="569.100" width="20.500" height="12.900"/><use href="#ph" x="220.200" y="585.200" width="20.500" height="12.900"/>
<path d="M221.800 568.800L237.800 582.800M237.800 568.800L221.800 582.800" stroke="#d0101c" stroke-width="2.100" stroke-linecap="round"/>
<path d="M242.200 595.200C248.600 593.600 252.600 588.600 251.600 582.600C251 578.900 248.500 576.500 245.500 575.700L246.600 572.800L238.600 575.400L242.400 582.400L243.400 579.700C245.300 581.400 246.100 584.200 245.600 587.400C245.100 590.500 243.800 593.200 242.200 595.200z" fill="url(#g-cy)" stroke="#1088ac" stroke-width=".5"/>
<!-- 11 stop -->
<use href="#stop" x="220.500" y="613" width="31.500" height="33.500"/>
</svg>
<div id="grid"><div id="gridin">
<div class="hdr"><span class="h" style="left:1px;width:66px">Type</span><span class="h sorted" style="left:68px;width:101px">Difference</span><span class="h" style="left:170px;width:34px">Tr...</span><span class="h" style="left:205px;width:59px">Hint</span><span class="h" style="left:265px;width:99px">Name</span><span class="h" style="left:365px;width:229px">In folder</span><span class="h" style="left:595px;width:103px">Dimensions</span><span class="h" style="left:699px;width:39px">Im...</span><span class="h" style="left:739px;width:86px">Blockiness</span><span class="h" style="left:826px;width:54px">Blurring</span><span class="h" style="left:881px;width:54px">Size</span><span class="h" style="left:936px;width:71px">Group</span></div>
<div class="row" style="top:23px"><span class="c big" style="left:1px;top:0px;width:66px;height:42px;line-height:45px;"><svg class="ti" width="32" height="16" viewBox="0 0 32 16"><use href="#i-type"/></svg></span><span class="c big r" style="left:68px;top:0px;width:98px;height:42px;line-height:45px;padding-right:3px;">0.52</span><span class="c big" style="left:170px;top:0px;width:34px;height:42px;line-height:45px;"><svg class="ci" width="22" height="26" viewBox="0 0 22 26"><use href="#i-check"/></svg></span><span class="c big" style="left:205px;top:0px;width:59px;height:42px;line-height:45px;"></span><span class="c l sub" style="left:265px;top:0px;width:96px;height:21px;line-height:24px;padding-left:3px;">4167123167 (1)...</span><span class="c l sub" style="left:365px;top:0px;width:226px;height:21px;line-height:24px;padding-left:3px;">C:\Users\sudop\Pictures\Photos</span><span class="c l dm sub" style="left:595px;top:0px;width:100px;height:21px;line-height:24px;padding-left:3px;">4032 x 3024</span><span class="c l jp sub" style="left:699px;top:0px;width:36px;height:21px;line-height:24px;padding-left:3px;">JPG</span><span class="c r sub red" style="left:739px;top:0px;width:85px;height:21px;line-height:24px;padding-right:1px;">3.00</span><span class="c r sub red" style="left:826px;top:0px;width:53px;height:21px;line-height:24px;padding-right:1px;">0.53</span><span class="c r sz sub" style="left:881px;top:0px;width:52px;height:21px;line-height:24px;padding-right:2px;">3 701 KB</span><span class="c l nm" style="left:265px;top:22px;width:96px;height:20px;line-height:23px;padding-left:3px;">4167123167.jpg</span><span class="c l" style="left:365px;top:22px;width:226px;height:20px;line-height:23px;padding-left:3px;">C:\Users\sudop\Pictures\Photos</span><span class="c l dm red" style="left:595px;top:22px;width:100px;height:20px;line-height:23px;padding-left:3px;">1200 x 900</span><span class="c l jp" style="left:699px;top:22px;width:36px;height:20px;line-height:23px;padding-left:3px;">JPG</span><span class="c r" style="left:739px;top:22px;width:85px;height:20px;line-height:23px;padding-right:1px;">0.11</span><span class="c r" style="left:826px;top:22px;width:53px;height:20px;line-height:23px;padding-right:1px;">0.23</span><span class="c r sz red" style="left:881px;top:22px;width:52px;height:20px;line-height:23px;padding-right:2px;">338 KB</span><span class="c big ctr" style="left:936px;top:0px;width:71px;height:42px;line-height:45px;">1</span></div>
<div class="row" style="top:66px"><span class="c big" style="left:1px;top:0px;width:66px;height:42px;line-height:45px;"><svg class="ti" width="32" height="16" viewBox="0 0 32 16"><use href="#i-type"/></svg></span><span class="c big r" style="left:68px;top:0px;width:98px;height:42px;line-height:45px;padding-right:3px;">1.00</span><span class="c big" style="left:170px;top:0px;width:34px;height:42px;line-height:45px;"><svg class="ci" width="22" height="26" viewBox="0 0 22 26"><use href="#i-check"/></svg></span><span class="c big" style="left:205px;top:0px;width:59px;height:42px;line-height:45px;"><svg class="hi" width="18" height="24" viewBox="0 0 18 24"><use href="#i-hint"/></svg></span><span class="c l nm sub" style="left:265px;top:0px;width:96px;height:21px;line-height:24px;padding-left:3px;">2582526629.jpg</span><span class="c l sub" style="left:365px;top:0px;width:226px;height:21px;line-height:24px;padding-left:3px;">C:\Users\sudop\Pictures\Photos</span><span class="c l dm sub" style="left:595px;top:0px;width:100px;height:21px;line-height:24px;padding-left:3px;">6016 x 4012</span><span class="c l jp sub" style="left:699px;top:0px;width:36px;height:21px;line-height:24px;padding-left:3px;">JPG</span><span class="c r sub" style="left:739px;top:0px;width:85px;height:21px;line-height:24px;padding-right:1px;">3.67</span><span class="c r sub" style="left:826px;top:0px;width:53px;height:21px;line-height:24px;padding-right:1px;">1.21</span><span class="c r sz sub" style="left:881px;top:0px;width:52px;height:21px;line-height:24px;padding-right:2px;">8 297 KB</span><span class="c l nm" style="left:265px;top:22px;width:96px;height:20px;line-height:23px;padding-left:3px;">7141232241.jpg</span><span class="c l" style="left:365px;top:22px;width:226px;height:20px;line-height:23px;padding-left:3px;">C:\Users\sudop\Pictures\Photos</span><span class="c l dm" style="left:595px;top:22px;width:100px;height:20px;line-height:23px;padding-left:3px;">6016 x 4012</span><span class="c l jp" style="left:699px;top:22px;width:36px;height:20px;line-height:23px;padding-left:3px;">JPG</span><span class="c r red" style="left:739px;top:22px;width:85px;height:20px;line-height:23px;padding-right:1px;">3.71</span><span class="c r red" style="left:826px;top:22px;width:53px;height:20px;line-height:23px;padding-right:1px;">1.28</span><span class="c r sz red" style="left:881px;top:22px;width:52px;height:20px;line-height:23px;padding-right:2px;">8 220 KB</span><span class="c big ctr" style="left:936px;top:0px;width:71px;height:42px;line-height:45px;">8</span></div>
<div class="row" style="top:109px"><span class="c big" style="left:1px;top:0px;width:66px;height:42px;line-height:45px;"><svg class="ti" width="32" height="16" viewBox="0 0 32 16"><use href="#i-type"/></svg></span><span class="c big r" style="left:68px;top:0px;width:98px;height:42px;line-height:45px;padding-right:3px;">1.13</span><span class="c big" style="left:170px;top:0px;width:34px;height:42px;line-height:45px;"><svg class="ci" width="22" height="26" viewBox="0 0 22 26"><use href="#i-check"/></svg></span><span class="c big" style="left:205px;top:0px;width:59px;height:42px;line-height:45px;"></span><span class="c l sub" style="left:265px;top:0px;width:96px;height:21px;line-height:24px;padding-left:3px;">8594185784 (1)...</span><span class="c l sub" style="left:365px;top:0px;width:226px;height:21px;line-height:24px;padding-left:3px;">C:\Users\sudop\Pictures\Photos</span><span class="c l dm sub" style="left:595px;top:0px;width:100px;height:21px;line-height:24px;padding-left:3px;">3024 x 4032</span><span class="c l jp sub" style="left:699px;top:0px;width:36px;height:21px;line-height:24px;padding-left:3px;">JPG</span><span class="c r sub red" style="left:739px;top:0px;width:85px;height:21px;line-height:24px;padding-right:1px;">14.56</span><span class="c r sub red" style="left:826px;top:0px;width:53px;height:21px;line-height:24px;padding-right:1px;">1.37</span><span class="c r sz sub" style="left:881px;top:0px;width:52px;height:21px;line-height:24px;padding-right:2px;">1 614 KB</span><span class="c l nm" style="left:265px;top:22px;width:96px;height:20px;line-height:23px;padding-left:3px;">8594185784.jpg</span><span class="c l" style="left:365px;top:22px;width:226px;height:20px;line-height:23px;padding-left:3px;">C:\Users\sudop\Pictures\Photos</span><span class="c l dm red" style="left:595px;top:22px;width:100px;height:20px;line-height:23px;padding-left:3px;">675 x 900</span><span class="c l jp" style="left:699px;top:22px;width:36px;height:20px;line-height:23px;padding-left:3px;">JPG</span><span class="c r" style="left:739px;top:22px;width:85px;height:20px;line-height:23px;padding-right:1px;">1.34</span><span class="c r" style="left:826px;top:22px;width:53px;height:20px;line-height:23px;padding-right:1px;">0.33</span><span class="c r sz red" style="left:881px;top:22px;width:52px;height:20px;line-height:23px;padding-right:2px;">146 KB</span><span class="c big ctr" style="left:936px;top:0px;width:71px;height:42px;line-height:45px;">9</span></div>
<div class="row" style="top:152px"><span class="c big" style="left:1px;top:0px;width:66px;height:42px;line-height:45px;"><svg class="ti" width="32" height="16" viewBox="0 0 32 16"><use href="#i-type"/></svg></span><span class="c big r" style="left:68px;top:0px;width:98px;height:42px;line-height:45px;padding-right:3px;">2.52</span><span class="c big" style="left:170px;top:0px;width:34px;height:42px;line-height:45px;"><svg class="ci" width="22" height="26" viewBox="0 0 22 26"><use href="#i-check"/></svg></span><span class="c big" style="left:205px;top:0px;width:59px;height:42px;line-height:45px;"></span><span class="c l nm sub" style="left:265px;top:0px;width:96px;height:21px;line-height:24px;padding-left:3px;">3118687656.jpg</span><span class="c l sub" style="left:365px;top:0px;width:226px;height:21px;line-height:24px;padding-left:3px;">C:\Users\sudop\Pictures\Photos</span><span class="c l dm sub" style="left:595px;top:0px;width:100px;height:21px;line-height:24px;padding-left:3px;">4032 x 3024</span><span class="c l jp sub" style="left:699px;top:0px;width:36px;height:21px;line-height:24px;padding-left:3px;">JPG</span><span class="c r sub" style="left:739px;top:0px;width:85px;height:21px;line-height:24px;padding-right:1px;">2.08</span><span class="c r sub red" style="left:826px;top:0px;width:53px;height:21px;line-height:24px;padding-right:1px;">0.41</span><span class="c r sz sub red" style="left:881px;top:0px;width:52px;height:21px;line-height:24px;padding-right:2px;">4 364 KB</span><span class="c l nm" style="left:265px;top:22px;width:96px;height:20px;line-height:23px;padding-left:3px;">3671074336.jpg</span><span class="c l" style="left:365px;top:22px;width:226px;height:20px;line-height:23px;padding-left:3px;">C:\Users\sudop\Pictures\Photos</span><span class="c l dm" style="left:595px;top:22px;width:100px;height:20px;line-height:23px;padding-left:3px;">4032 x 3024</span><span class="c l jp" style="left:699px;top:22px;width:36px;height:20px;line-height:23px;padding-left:3px;">JPG</span><span class="c r red" style="left:739px;top:22px;width:85px;height:20px;line-height:23px;padding-right:1px;">2.54</span><span class="c r" style="left:826px;top:22px;width:53px;height:20px;line-height:23px;padding-right:1px;">0.40</span><span class="c r sz" style="left:881px;top:22px;width:52px;height:20px;line-height:23px;padding-right:2px;">4 433 KB</span><span class="c big ctr" style="left:936px;top:0px;width:71px;height:42px;line-height:45px;">0</span></div>
<div class="row" style="top:195px"><span class="c big" style="left:1px;top:0px;width:66px;height:42px;line-height:45px;"><svg class="ti" width="32" height="16" viewBox="0 0 32 16"><use href="#i-type"/></svg></span><span class="c big r" style="left:68px;top:0px;width:98px;height:42px;line-height:45px;padding-right:3px;">3.56</span><span class="c big" style="left:170px;top:0px;width:34px;height:42px;line-height:45px;"><svg class="ci" width="22" height="26" viewBox="0 0 22 26"><use href="#i-check"/></svg></span><span class="c big" style="left:205px;top:0px;width:59px;height:42px;line-height:45px;"></span><span class="c l nm sub" style="left:265px;top:0px;width:96px;height:21px;line-height:24px;padding-left:3px;">1395043922.jpg</span><span class="c l sub" style="left:365px;top:0px;width:226px;height:21px;line-height:24px;padding-left:3px;">C:\Users\sudop\Pictures\Photos</span><span class="c l dm sub" style="left:595px;top:0px;width:100px;height:21px;line-height:24px;padding-left:3px;">4032 x 3024</span><span class="c l jp sub" style="left:699px;top:0px;width:36px;height:21px;line-height:24px;padding-left:3px;">JPG</span><span class="c r sub red" style="left:739px;top:0px;width:85px;height:21px;line-height:24px;padding-right:1px;">2.13</span><span class="c r sub" style="left:826px;top:0px;width:53px;height:21px;line-height:24px;padding-right:1px;">0.40</span><span class="c r sz sub" style="left:881px;top:0px;width:52px;height:21px;line-height:24px;padding-right:2px;">4 442 KB</span><span class="c l nm" style="left:265px;top:22px;width:96px;height:20px;line-height:23px;padding-left:3px;">3118687656.jpg</span><span class="c l" style="left:365px;top:22px;width:226px;height:20px;line-height:23px;padding-left:3px;">C:\Users\sudop\Pictures\Photos</span><span class="c l dm" style="left:595px;top:22px;width:100px;height:20px;line-height:23px;padding-left:3px;">4032 x 3024</span><span class="c l jp" style="left:699px;top:22px;width:36px;height:20px;line-height:23px;padding-left:3px;">JPG</span><span class="c r" style="left:739px;top:22px;width:85px;height:20px;line-height:23px;padding-right:1px;">2.08</span><span class="c r red" style="left:826px;top:22px;width:53px;height:20px;line-height:23px;padding-right:1px;">0.41</span><span class="c r sz red" style="left:881px;top:22px;width:52px;height:20px;line-height:23px;padding-right:2px;">4 364 KB</span><span class="c big ctr" style="left:936px;top:0px;width:71px;height:42px;line-height:45px;">0</span></div>
<div class="row" style="top:238px"><span class="c big" style="left:1px;top:0px;width:66px;height:42px;line-height:45px;"><svg class="ti" width="32" height="16" viewBox="0 0 32 16"><use href="#i-type"/></svg></span><span class="c big r" style="left:68px;top:0px;width:98px;height:42px;line-height:45px;padding-right:3px;">3.60</span><span class="c big" style="left:170px;top:0px;width:34px;height:42px;line-height:45px;"><svg class="ci" width="22" height="26" viewBox="0 0 22 26"><use href="#i-check"/></svg></span><span class="c big" style="left:205px;top:0px;width:59px;height:42px;line-height:45px;"></span><span class="c l nm sub" style="left:265px;top:0px;width:96px;height:21px;line-height:24px;padding-left:3px;">1395043922.jpg</span><span class="c l sub" style="left:365px;top:0px;width:226px;height:21px;line-height:24px;padding-left:3px;">C:\Users\sudop\Pictures\Photos</span><span class="c l dm sub" style="left:595px;top:0px;width:100px;height:21px;line-height:24px;padding-left:3px;">4032 x 3024</span><span class="c l jp sub" style="left:699px;top:0px;width:36px;height:21px;line-height:24px;padding-left:3px;">JPG</span><span class="c r sub" style="left:739px;top:0px;width:85px;height:21px;line-height:24px;padding-right:1px;">2.13</span><span class="c r sub red" style="left:826px;top:0px;width:53px;height:21px;line-height:24px;padding-right:1px;">0.40</span><span class="c r sz sub" style="left:881px;top:0px;width:52px;height:21px;line-height:24px;padding-right:2px;">4 442 KB</span><span class="c l nm" style="left:265px;top:22px;width:96px;height:20px;line-height:23px;padding-left:3px;">3671074336.jpg</span><span class="c l" style="left:365px;top:22px;width:226px;height:20px;line-height:23px;padding-left:3px;">C:\Users\sudop\Pictures\Photos</span><span class="c l dm" style="left:595px;top:22px;width:100px;height:20px;line-height:23px;padding-left:3px;">4032 x 3024</span><span class="c l jp" style="left:699px;top:22px;width:36px;height:20px;line-height:23px;padding-left:3px;">JPG</span><span class="c r red" style="left:739px;top:22px;width:85px;height:20px;line-height:23px;padding-right:1px;">2.54</span><span class="c r" style="left:826px;top:22px;width:53px;height:20px;line-height:23px;padding-right:1px;">0.40</span><span class="c r sz red" style="left:881px;top:22px;width:52px;height:20px;line-height:23px;padding-right:2px;">4 433 KB</span><span class="c big ctr" style="left:936px;top:0px;width:71px;height:42px;line-height:45px;">0</span></div>
<div class="row" style="top:281px"><span class="c big" style="left:1px;top:0px;width:66px;height:42px;line-height:45px;"><svg class="ti" width="32" height="16" viewBox="0 0 32 16"><use href="#i-type"/></svg></span><span class="c big r" style="left:68px;top:0px;width:98px;height:42px;line-height:45px;padding-right:3px;">3.83</span><span class="c big" style="left:170px;top:0px;width:34px;height:42px;line-height:45px;"><svg class="ci" width="22" height="26" viewBox="0 0 22 26"><use href="#i-check"/></svg></span><span class="c big" style="left:205px;top:0px;width:59px;height:42px;line-height:45px;"></span><span class="c l nm sub" style="left:265px;top:0px;width:96px;height:21px;line-height:24px;padding-left:3px;">2330586925.jpg</span><span class="c l sub" style="left:365px;top:0px;width:226px;height:21px;line-height:24px;padding-left:3px;">C:\Users\sudop\Pictures\Photos</span><span class="c l dm sub" style="left:595px;top:0px;width:100px;height:21px;line-height:24px;padding-left:3px;">4032 x 3024</span><span class="c l jp sub" style="left:699px;top:0px;width:36px;height:21px;line-height:24px;padding-left:3px;">JPG</span><span class="c r sub" style="left:739px;top:0px;width:85px;height:21px;line-height:24px;padding-right:1px;">0.86</span><span class="c r sub" style="left:826px;top:0px;width:53px;height:21px;line-height:24px;padding-right:1px;">0.31</span><span class="c r sz sub" style="left:881px;top:0px;width:52px;height:21px;line-height:24px;padding-right:2px;">4 900 KB</span><span class="c l nm" style="left:265px;top:22px;width:96px;height:20px;line-height:23px;padding-left:3px;">3671074336.jpg</span><span class="c l" style="left:365px;top:22px;width:226px;height:20px;line-height:23px;padding-left:3px;">C:\Users\sudop\Pictures\Photos</span><span class="c l dm" style="left:595px;top:22px;width:100px;height:20px;line-height:23px;padding-left:3px;">4032 x 3024</span><span class="c l jp" style="left:699px;top:22px;width:36px;height:20px;line-height:23px;padding-left:3px;">JPG</span><span class="c r red" style="left:739px;top:22px;width:85px;height:20px;line-height:23px;padding-right:1px;">2.54</span><span class="c r red" style="left:826px;top:22px;width:53px;height:20px;line-height:23px;padding-right:1px;">0.40</span><span class="c r sz red" style="left:881px;top:22px;width:52px;height:20px;line-height:23px;padding-right:2px;">4 433 KB</span><span class="c big ctr" style="left:936px;top:0px;width:71px;height:42px;line-height:45px;">0</span></div>
<div class="row" style="top:324px"><span class="c big" style="left:1px;top:0px;width:66px;height:42px;line-height:45px;"><svg class="ti" width="32" height="16" viewBox="0 0 32 16"><use href="#i-type"/></svg></span><span class="c big r" style="left:68px;top:0px;width:98px;height:42px;line-height:45px;padding-right:3px;">4.38</span><span class="c big" style="left:170px;top:0px;width:34px;height:42px;line-height:45px;"><svg class="ci" width="22" height="26" viewBox="0 0 22 26"><use href="#i-check"/></svg></span><span class="c big" style="left:205px;top:0px;width:59px;height:42px;line-height:45px;"></span><span class="c l nm sub" style="left:265px;top:0px;width:96px;height:21px;line-height:24px;padding-left:3px;">2330586925.jpg</span><span class="c l sub" style="left:365px;top:0px;width:226px;height:21px;line-height:24px;padding-left:3px;">C:\Users\sudop\Pictures\Photos</span><span class="c l dm sub" style="left:595px;top:0px;width:100px;height:21px;line-height:24px;padding-left:3px;">4032 x 3024</span><span class="c l jp sub" style="left:699px;top:0px;width:36px;height:21px;line-height:24px;padding-left:3px;">JPG</span><span class="c r sub" style="left:739px;top:0px;width:85px;height:21px;line-height:24px;padding-right:1px;">0.86</span><span class="c r sub" style="left:826px;top:0px;width:53px;height:21px;line-height:24px;padding-right:1px;">0.31</span><span class="c r sz sub" style="left:881px;top:0px;width:52px;height:21px;line-height:24px;padding-right:2px;">4 900 KB</span><span class="c l nm" style="left:265px;top:22px;width:96px;height:20px;line-height:23px;padding-left:3px;">3118687656.jpg</span><span class="c l" style="left:365px;top:22px;width:226px;height:20px;line-height:23px;padding-left:3px;">C:\Users\sudop\Pictures\Photos</span><span class="c l dm" style="left:595px;top:22px;width:100px;height:20px;line-height:23px;padding-left:3px;">4032 x 3024</span><span class="c l jp" style="left:699px;top:22px;width:36px;height:20px;line-height:23px;padding-left:3px;">JPG</span><span class="c r red" style="left:739px;top:22px;width:85px;height:20px;line-height:23px;padding-right:1px;">2.08</span><span class="c r red" style="left:826px;top:22px;width:53px;height:20px;line-height:23px;padding-right:1px;">0.41</span><span class="c r sz red" style="left:881px;top:22px;width:52px;height:20px;line-height:23px;padding-right:2px;">4 364 KB</span><span class="c big ctr" style="left:936px;top:0px;width:71px;height:42px;line-height:45px;">0</span></div>
<div class="row" style="top:367px"><span class="c big" style="left:1px;top:0px;width:66px;height:42px;line-height:45px;"><svg class="ti" width="32" height="16" viewBox="0 0 32 16"><use href="#i-type"/></svg></span><span class="c big r" style="left:68px;top:0px;width:98px;height:42px;line-height:45px;padding-right:3px;">4.42</span><span class="c big" style="left:170px;top:0px;width:34px;height:42px;line-height:45px;"><svg class="ci" width="22" height="26" viewBox="0 0 22 26"><use href="#i-check"/></svg></span><span class="c big" style="left:205px;top:0px;width:59px;height:42px;line-height:45px;"></span><span class="c l nm sub" style="left:265px;top:0px;width:96px;height:21px;line-height:24px;padding-left:3px;">2721931304.jpg</span><span class="c l sub" style="left:365px;top:0px;width:226px;height:21px;line-height:24px;padding-left:3px;">C:\Users\sudop\Pictures\Photos</span><span class="c l dm sub" style="left:595px;top:0px;width:100px;height:21px;line-height:24px;padding-left:3px;">4032 x 3024</span><span class="c l jp sub" style="left:699px;top:0px;width:36px;height:21px;line-height:24px;padding-left:3px;">JPG</span><span class="c r sub" style="left:739px;top:0px;width:85px;height:21px;line-height:24px;padding-right:1px;">1.69</span><span class="c r sub" style="left:826px;top:0px;width:53px;height:21px;line-height:24px;padding-right:1px;">0.32</span><span class="c r sz sub" style="left:881px;top:0px;width:52px;height:21px;line-height:24px;padding-right:2px;">4 660 KB</span><span class="c l nm" style="left:265px;top:22px;width:96px;height:20px;line-height:23px;padding-left:3px;">6780572606.jpg</span><span class="c l" style="left:365px;top:22px;width:226px;height:20px;line-height:23px;padding-left:3px;">C:\Users\sudop\Pictures\Photos</span><span class="c l dm" style="left:595px;top:22px;width:100px;height:20px;line-height:23px;padding-left:3px;">4032 x 3024</span><span class="c l jp" style="left:699px;top:22px;width:36px;height:20px;line-height:23px;padding-left:3px;">JPG</span><span class="c r red" style="left:739px;top:22px;width:85px;height:20px;line-height:23px;padding-right:1px;">2.71</span><span class="c r red" style="left:826px;top:22px;width:53px;height:20px;line-height:23px;padding-right:1px;">0.48</span><span class="c r sz red" style="left:881px;top:22px;width:52px;height:20px;line-height:23px;padding-right:2px;">4 304 KB</span><span class="c big ctr" style="left:936px;top:0px;width:71px;height:42px;line-height:45px;">6</span></div>
<div class="row" style="top:410px"><span class="c big" style="left:1px;top:0px;width:66px;height:42px;line-height:45px;"><svg class="ti" width="32" height="16" viewBox="0 0 32 16"><use href="#i-type"/></svg></span><span class="c big r" style="left:68px;top:0px;width:98px;height:42px;line-height:45px;padding-right:3px;">5.04</span><span class="c big" style="left:170px;top:0px;width:34px;height:42px;line-height:45px;"><svg class="ci" width="22" height="26" viewBox="0 0 22 26"><use href="#i-check"/></svg></span><span class="c big" style="left:205px;top:0px;width:59px;height:42px;line-height:45px;"></span><span class="c l nm sub" style="left:265px;top:0px;width:96px;height:21px;line-height:24px;padding-left:3px;">1395043922.jpg</span><span class="c l sub" style="left:365px;top:0px;width:226px;height:21px;line-height:24px;padding-left:3px;">C:\Users\sudop\Pictures\Photos</span><span class="c l dm sub" style="left:595px;top:0px;width:100px;height:21px;line-height:24px;padding-left:3px;">4032 x 3024</span><span class="c l jp sub" style="left:699px;top:0px;width:36px;height:21px;line-height:24px;padding-left:3px;">JPG</span><span class="c r sub red" style="left:739px;top:0px;width:85px;height:21px;line-height:24px;padding-right:1px;">2.13</span><span class="c r sub red" style="left:826px;top:0px;width:53px;height:21px;line-height:24px;padding-right:1px;">0.40</span><span class="c r sz sub red" style="left:881px;top:0px;width:52px;height:21px;line-height:24px;padding-right:2px;">4 442 KB</span><span class="c l nm" style="left:265px;top:22px;width:96px;height:20px;line-height:23px;padding-left:3px;">2330586925.jpg</span><span class="c l" style="left:365px;top:22px;width:226px;height:20px;line-height:23px;padding-left:3px;">C:\Users\sudop\Pictures\Photos</span><span class="c l dm" style="left:595px;top:22px;width:100px;height:20px;line-height:23px;padding-left:3px;">4032 x 3024</span><span class="c l jp" style="left:699px;top:22px;width:36px;height:20px;line-height:23px;padding-left:3px;">JPG</span><span class="c r" style="left:739px;top:22px;width:85px;height:20px;line-height:23px;padding-right:1px;">0.86</span><span class="c r" style="left:826px;top:22px;width:53px;height:20px;line-height:23px;padding-right:1px;">0.31</span><span class="c r sz" style="left:881px;top:22px;width:52px;height:20px;line-height:23px;padding-right:2px;">4 900 KB</span><span class="c big ctr" style="left:936px;top:0px;width:71px;height:42px;line-height:45px;">0</span></div>
<div class="row" style="top:453px"><span class="c big" style="left:1px;top:0px;width:66px;height:42px;line-height:45px;"><svg class="ti" width="32" height="16" viewBox="0 0 32 16"><use href="#i-type"/></svg></span><span class="c big r" style="left:68px;top:0px;width:98px;height:42px;line-height:45px;padding-right:3px;">5.70</span><span class="c big" style="left:170px;top:0px;width:34px;height:42px;line-height:45px;"><svg class="ci" width="22" height="26" viewBox="0 0 22 26"><use href="#i-check"/></svg></span><span class="c big" style="left:205px;top:0px;width:59px;height:42px;line-height:45px;"></span><span class="c l nm sub" style="left:265px;top:0px;width:96px;height:21px;line-height:24px;padding-left:3px;">5785931853.jpg</span><span class="c l sub" style="left:365px;top:0px;width:226px;height:21px;line-height:24px;padding-left:3px;">C:\Users\sudop\Pictures\Photos</span><span class="c l dm sub" style="left:595px;top:0px;width:100px;height:21px;line-height:24px;padding-left:3px;">4032 x 3024</span><span class="c l jp sub" style="left:699px;top:0px;width:36px;height:21px;line-height:24px;padding-left:3px;">JPG</span><span class="c r sub red" style="left:739px;top:0px;width:85px;height:21px;line-height:24px;padding-right:1px;">0.73</span><span class="c r sub red" style="left:826px;top:0px;width:53px;height:21px;line-height:24px;padding-right:1px;">0.45</span><span class="c r sz sub red" style="left:881px;top:0px;width:52px;height:21px;line-height:24px;padding-right:2px;">4 928 KB</span><span class="c l nm" style="left:265px;top:22px;width:96px;height:20px;line-height:23px;padding-left:3px;">7017603356.jpg</span><span class="c l" style="left:365px;top:22px;width:226px;height:20px;line-height:23px;padding-left:3px;">C:\Users\sudop\Pictures\Photos</span><span class="c l dm" style="left:595px;top:22px;width:100px;height:20px;line-height:23px;padding-left:3px;">4032 x 3024</span><span class="c l jp" style="left:699px;top:22px;width:36px;height:20px;line-height:23px;padding-left:3px;">JPG</span><span class="c r" style="left:739px;top:22px;width:85px;height:20px;line-height:23px;padding-right:1px;">0.37</span><span class="c r" style="left:826px;top:22px;width:53px;height:20px;line-height:23px;padding-right:1px;">0.39</span><span class="c r sz" style="left:881px;top:22px;width:52px;height:20px;line-height:23px;padding-right:2px;">5 506 KB</span><span class="c big ctr" style="left:936px;top:0px;width:71px;height:42px;line-height:45px;">4</span></div>
<div class="row" style="top:496px"><span class="c big" style="left:1px;top:0px;width:66px;height:42px;line-height:45px;"><svg class="ti" width="32" height="16" viewBox="0 0 32 16"><use href="#i-type"/></svg></span><span class="c big r" style="left:68px;top:0px;width:98px;height:42px;line-height:45px;padding-right:3px;">6.48</span><span class="c big" style="left:170px;top:0px;width:34px;height:42px;line-height:45px;"><svg class="ci" width="22" height="26" viewBox="0 0 22 26"><use href="#i-check"/></svg></span><span class="c big" style="left:205px;top:0px;width:59px;height:42px;line-height:45px;"></span><span class="c l nm sub" style="left:265px;top:0px;width:96px;height:21px;line-height:24px;padding-left:3px;">5785931853.jpg</span><span class="c l sub" style="left:365px;top:0px;width:226px;height:21px;line-height:24px;padding-left:3px;">C:\Users\sudop\Pictures\Photos</span><span class="c l dm sub" style="left:595px;top:0px;width:100px;height:21px;line-height:24px;padding-left:3px;">4032 x 3024</span><span class="c l jp sub" style="left:699px;top:0px;width:36px;height:21px;line-height:24px;padding-left:3px;">JPG</span><span class="c r sub" style="left:739px;top:0px;width:85px;height:21px;line-height:24px;padding-right:1px;">0.73</span><span class="c r sub red" style="left:826px;top:0px;width:53px;height:21px;line-height:24px;padding-right:1px;">0.45</span><span class="c r sz sub red" style="left:881px;top:0px;width:52px;height:21px;line-height:24px;padding-right:2px;">4 928 KB</span><span class="c l nm" style="left:265px;top:22px;width:96px;height:20px;line-height:23px;padding-left:3px;">9207909199.jpg</span><span class="c l" style="left:365px;top:22px;width:226px;height:20px;line-height:23px;padding-left:3px;">C:\Users\sudop\Pictures\Photos</span><span class="c l dm" style="left:595px;top:22px;width:100px;height:20px;line-height:23px;padding-left:3px;">4032 x 3024</span><span class="c l jp" style="left:699px;top:22px;width:36px;height:20px;line-height:23px;padding-left:3px;">JPG</span><span class="c r red" style="left:739px;top:22px;width:85px;height:20px;line-height:23px;padding-right:1px;">0.77</span><span class="c r" style="left:826px;top:22px;width:53px;height:20px;line-height:23px;padding-right:1px;">0.43</span><span class="c r sz" style="left:881px;top:22px;width:52px;height:20px;line-height:23px;padding-right:2px;">4 972 KB</span><span class="c big ctr" style="left:936px;top:0px;width:71px;height:42px;line-height:45px;">4</span></div>
<div class="row" style="top:539px"><span class="c big" style="left:1px;top:0px;width:66px;height:42px;line-height:45px;"><svg class="ti" width="32" height="16" viewBox="0 0 32 16"><use href="#i-type"/></svg></span><span class="c big r" style="left:68px;top:0px;width:98px;height:42px;line-height:45px;padding-right:3px;">6.70</span><span class="c big" style="left:170px;top:0px;width:34px;height:42px;line-height:45px;"><svg class="ci" width="22" height="26" viewBox="0 0 22 26"><use href="#i-check"/></svg></span><span class="c big" style="left:205px;top:0px;width:59px;height:42px;line-height:45px;"></span><span class="c l nm sub" style="left:265px;top:0px;width:96px;height:21px;line-height:24px;padding-left:3px;">5785931853.jpg</span><span class="c l sub" style="left:365px;top:0px;width:226px;height:21px;line-height:24px;padding-left:3px;">C:\Users\sudop\Pictures\Photos</span><span class="c l dm sub" style="left:595px;top:0px;width:100px;height:21px;line-height:24px;padding-left:3px;">4032 x 3024</span><span class="c l jp sub" style="left:699px;top:0px;width:36px;height:21px;line-height:24px;padding-left:3px;">JPG</span><span class="c r sub red" style="left:739px;top:0px;width:85px;height:21px;line-height:24px;padding-right:1px;">0.73</span><span class="c r sub red" style="left:826px;top:0px;width:53px;height:21px;line-height:24px;padding-right:1px;">0.45</span><span class="c r sz sub red" style="left:881px;top:0px;width:52px;height:21px;line-height:24px;padding-right:2px;">4 928 KB</span><span class="c l nm" style="left:265px;top:22px;width:96px;height:20px;line-height:23px;padding-left:3px;">6238799713.jpg</span><span class="c l" style="left:365px;top:22px;width:226px;height:20px;line-height:23px;padding-left:3px;">C:\Users\sudop\Pictures\Photos</span><span class="c l dm" style="left:595px;top:22px;width:100px;height:20px;line-height:23px;padding-left:3px;">4032 x 3024</span><span class="c l jp" style="left:699px;top:22px;width:36px;height:20px;line-height:23px;padding-left:3px;">JPG</span><span class="c r" style="left:739px;top:22px;width:85px;height:20px;line-height:23px;padding-right:1px;">0.48</span><span class="c r" style="left:826px;top:22px;width:53px;height:20px;line-height:23px;padding-right:1px;">0.42</span><span class="c r sz" style="left:881px;top:22px;width:52px;height:20px;line-height:23px;padding-right:2px;">4 991 KB</span><span class="c big ctr" style="left:936px;top:0px;width:71px;height:42px;line-height:45px;">4</span></div>
<div class="row sel" style="top:582px"><span class="c big" style="left:1px;top:0px;width:66px;height:42px;line-height:45px;"><svg class="ti" width="32" height="16" viewBox="0 0 32 16"><use href="#i-type"/></svg></span><span class="c big r" style="left:68px;top:0px;width:98px;height:42px;line-height:45px;padding-right:3px;">8.17</span><span class="c big" style="left:170px;top:0px;width:34px;height:42px;line-height:45px;"><svg class="ci" width="22" height="26" viewBox="0 0 22 26"><use href="#i-check"/></svg></span><span class="c big" style="left:205px;top:0px;width:59px;height:42px;line-height:45px;"></span><span class="c l nm sub" style="left:265px;top:0px;width:96px;height:21px;line-height:24px;padding-left:3px;">6238799713.jpg</span><span class="c l sub" style="left:365px;top:0px;width:226px;height:21px;line-height:24px;padding-left:3px;">C:\Users\sudop\Pictures\Photos</span><span class="c l dm sub" style="left:595px;top:0px;width:100px;height:21px;line-height:24px;padding-left:3px;">4032 x 3024</span><span class="c l jp sub" style="left:699px;top:0px;width:36px;height:21px;line-height:24px;padding-left:3px;">JPG</span><span class="c r sub red" style="left:739px;top:0px;width:85px;height:21px;line-height:24px;padding-right:1px;">0.48</span><span class="c r sub red" style="left:826px;top:0px;width:53px;height:21px;line-height:24px;padding-right:1px;">0.42</span><span class="c r sz sub red" style="left:881px;top:0px;width:52px;height:21px;line-height:24px;padding-right:2px;">4 991 KB</span><span class="c l nm" style="left:265px;top:22px;width:96px;height:20px;line-height:23px;padding-left:3px;">7017603356.jpg</span><span class="c l" style="left:365px;top:22px;width:226px;height:20px;line-height:23px;padding-left:3px;">C:\Users\sudop\Pictures\Photos</span><span class="c l dm" style="left:595px;top:22px;width:100px;height:20px;line-height:23px;padding-left:3px;">4032 x 3024</span><span class="c l jp" style="left:699px;top:22px;width:36px;height:20px;line-height:23px;padding-left:3px;">JPG</span><span class="c r" style="left:739px;top:22px;width:85px;height:20px;line-height:23px;padding-right:1px;">0.37</span><span class="c r" style="left:826px;top:22px;width:53px;height:20px;line-height:23px;padding-right:1px;">0.39</span><span class="c r sz" style="left:881px;top:22px;width:52px;height:20px;line-height:23px;padding-right:2px;">5 506 KB</span><span class="c big ctr" style="left:936px;top:0px;width:71px;height:42px;line-height:45px;">4</span></div>
<div class="row" style="top:625px"><span class="c big" style="left:1px;top:0px;width:66px;height:42px;line-height:45px;"><svg class="ti" width="32" height="16" viewBox="0 0 32 16"><use href="#i-type"/></svg></span><span class="c big r" style="left:68px;top:0px;width:98px;height:42px;line-height:45px;padding-right:3px;">8.32</span><span class="c big" style="left:170px;top:0px;width:34px;height:42px;line-height:45px;"><svg class="ci" width="22" height="26" viewBox="0 0 22 26"><use href="#i-check"/></svg></span><span class="c big" style="left:205px;top:0px;width:59px;height:42px;line-height:45px;"></span><span class="c l nm sub" style="left:265px;top:0px;width:96px;height:21px;line-height:24px;padding-left:3px;">3118687656.jpg</span><span class="c l sub" style="left:365px;top:0px;width:226px;height:21px;line-height:24px;padding-left:3px;">C:\Users\sudop\Pictures\Photos</span><span class="c l dm sub" style="left:595px;top:0px;width:100px;height:21px;line-height:24px;padding-left:3px;">4032 x 3024</span><span class="c l jp sub" style="left:699px;top:0px;width:36px;height:21px;line-height:24px;padding-left:3px;">JPG</span><span class="c r sub" style="left:739px;top:0px;width:85px;height:21px;line-height:24px;padding-right:1px;">2.08</span><span class="c r sub red" style="left:826px;top:0px;width:53px;height:21px;line-height:24px;padding-right:1px;">0.41</span><span class="c r sz sub red" style="left:881px;top:0px;width:52px;height:21px;line-height:24px;padding-right:2px;">4 364 KB</span><span class="c l nm" style="left:265px;top:22px;width:96px;height:20px;line-height:23px;padding-left:3px;">7707544437.jpg</span><span class="c l" style="left:365px;top:22px;width:226px;height:20px;line-height:23px;padding-left:3px;">C:\Users\sudop\Pictures\Photos</span><span class="c l dm" style="left:595px;top:22px;width:100px;height:20px;line-height:23px;padding-left:3px;">4032 x 3024</span><span class="c l jp" style="left:699px;top:22px;width:36px;height:20px;line-height:23px;padding-left:3px;">JPG</span><span class="c r red" style="left:739px;top:22px;width:85px;height:20px;line-height:23px;padding-right:1px;">2.22</span><span class="c r" style="left:826px;top:22px;width:53px;height:20px;line-height:23px;padding-right:1px;">0.40</span><span class="c r sz" style="left:881px;top:22px;width:52px;height:20px;line-height:23px;padding-right:2px;">4 449 KB</span><span class="c big ctr" style="left:936px;top:0px;width:71px;height:42px;line-height:45px;">0</span></div>
<div class="row" style="top:668px"><span class="c big" style="left:1px;top:0px;width:66px;height:42px;line-height:45px;"><svg class="ti" width="32" height="16" viewBox="0 0 32 16"><use href="#i-type"/></svg></span><span class="c big r" style="left:68px;top:0px;width:98px;height:42px;line-height:45px;padding-right:3px;">8.56</span><span class="c big" style="left:170px;top:0px;width:34px;height:42px;line-height:45px;"><svg class="ci" width="22" height="26" viewBox="0 0 22 26"><use href="#i-check"/></svg></span><span class="c big" style="left:205px;top:0px;width:59px;height:42px;line-height:45px;"></span><span class="c l nm sub" style="left:265px;top:0px;width:96px;height:21px;line-height:24px;padding-left:3px;">3671074336.jpg</span><span class="c l sub" style="left:365px;top:0px;width:226px;height:21px;line-height:24px;padding-left:3px;">C:\Users\sudop\Pictures\Photos</span><span class="c l dm sub" style="left:595px;top:0px;width:100px;height:21px;line-height:24px;padding-left:3px;">4032 x 3024</span><span class="c l jp sub" style="left:699px;top:0px;width:36px;height:21px;line-height:24px;padding-left:3px;">JPG</span><span class="c r sub red" style="left:739px;top:0px;width:85px;height:21px;line-height:24px;padding-right:1px;">2.54</span><span class="c r sub" style="left:826px;top:0px;width:53px;height:21px;line-height:24px;padding-right:1px;">0.40</span><span class="c r sz sub red" style="left:881px;top:0px;width:52px;height:21px;line-height:24px;padding-right:2px;">4 433 KB</span><span class="c l nm" style="left:265px;top:22px;width:96px;height:20px;line-height:23px;padding-left:3px;">7707544437.jpg</span><span class="c l" style="left:365px;top:22px;width:226px;height:20px;line-height:23px;padding-left:3px;">C:\Users\sudop\Pictures\Photos</span><span class="c l dm" style="left:595px;top:22px;width:100px;height:20px;line-height:23px;padding-left:3px;">4032 x 3024</span><span class="c l jp" style="left:699px;top:22px;width:36px;height:20px;line-height:23px;padding-left:3px;">JPG</span><span class="c r" style="left:739px;top:22px;width:85px;height:20px;line-height:23px;padding-right:1px;">2.22</span><span class="c r red" style="left:826px;top:22px;width:53px;height:20px;line-height:23px;padding-right:1px;">0.40</span><span class="c r sz" style="left:881px;top:22px;width:52px;height:20px;line-height:23px;padding-right:2px;">4 449 KB</span><span class="c big ctr" style="left:936px;top:0px;width:71px;height:42px;line-height:45px;">0</span></div>
<div class="row" style="top:711px"><span class="c big" style="left:1px;top:0px;width:66px;height:42px;line-height:45px;"><svg class="ti" width="32" height="16" viewBox="0 0 32 16"><use href="#i-type"/></svg></span><span class="c big r" style="left:68px;top:0px;width:98px;height:42px;line-height:45px;padding-right:3px;">8.71</span><span class="c big" style="left:170px;top:0px;width:34px;height:42px;line-height:45px;"><svg class="ci" width="22" height="26" viewBox="0 0 22 26"><use href="#i-check"/></svg></span><span class="c big" style="left:205px;top:0px;width:59px;height:42px;line-height:45px;"></span><span class="c l nm sub" style="left:265px;top:0px;width:96px;height:21px;line-height:24px;padding-left:3px;">1395043922.jpg</span><span class="c l sub" style="left:365px;top:0px;width:226px;height:21px;line-height:24px;padding-left:3px;">C:\Users\sudop\Pictures\Photos</span><span class="c l dm sub" style="left:595px;top:0px;width:100px;height:21px;line-height:24px;padding-left:3px;">4032 x 3024</span><span class="c l jp sub" style="left:699px;top:0px;width:36px;height:21px;line-height:24px;padding-left:3px;">JPG</span><span class="c r sub" style="left:739px;top:0px;width:85px;height:21px;line-height:24px;padding-right:1px;">2.13</span><span class="c r sub red" style="left:826px;top:0px;width:53px;height:21px;line-height:24px;padding-right:1px;">0.40</span><span class="c r sz sub red" style="left:881px;top:0px;width:52px;height:21px;line-height:24px;padding-right:2px;">4 442 KB</span><span class="c l nm" style="left:265px;top:22px;width:96px;height:20px;line-height:23px;padding-left:3px;">7707544437.jpg</span><span class="c l" style="left:365px;top:22px;width:226px;height:20px;line-height:23px;padding-left:3px;">C:\Users\sudop\Pictures\Photos</span><span class="c l dm" style="left:595px;top:22px;width:100px;height:20px;line-height:23px;padding-left:3px;">4032 x 3024</span><span class="c l jp" style="left:699px;top:22px;width:36px;height:20px;line-height:23px;padding-left:3px;">JPG</span><span class="c r red" style="left:739px;top:22px;width:85px;height:20px;line-height:23px;padding-right:1px;">2.22</span><span class="c r" style="left:826px;top:22px;width:53px;height:20px;line-height:23px;padding-right:1px;">0.40</span><span class="c r sz" style="left:881px;top:22px;width:52px;height:20px;line-height:23px;padding-right:2px;">4 449 KB</span><span class="c big ctr" style="left:936px;top:0px;width:71px;height:42px;line-height:45px;">0</span></div>
</div><div class="vscroll"><div class="thumb"></div></div></div>
<div id="status"><span class="sp" style="left:0;width:532px">Total: 49</span><span class="sp" style="left:535px;width:530px">Current: 14</span><span class="sp" style="left:1068px;width:531px">Selected: 1</span></div>
</body></html>
